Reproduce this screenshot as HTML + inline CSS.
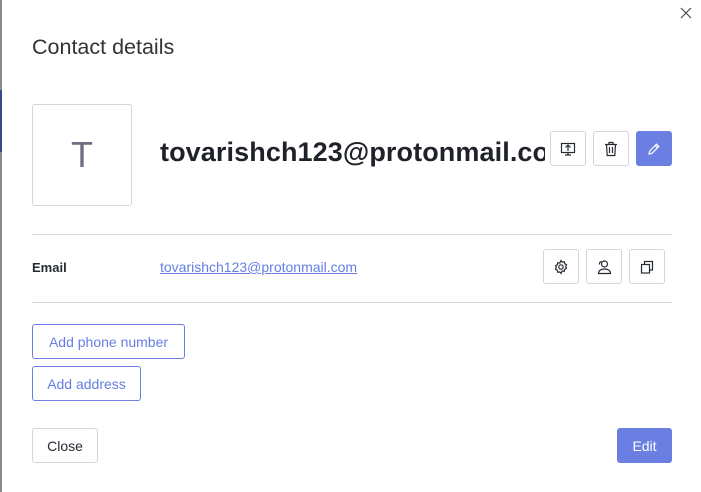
<!DOCTYPE html>
<html><head><meta charset="utf-8"><style>
*{box-sizing:border-box;margin:0;padding:0}
body{width:701px;height:492px;background:#fff;font-family:"Liberation Sans",sans-serif;position:relative;overflow:hidden;color:#262a33}
.abs{position:absolute}
.btn{position:absolute;border:1px solid #d4d4dc;border-radius:3px;background:#fff;display:flex;align-items:center;justify-content:center}
.pb{position:absolute;border:1px solid #6d7fe6;border-radius:3px;color:#657ee4;font-size:14px;display:flex;align-items:center;justify-content:center}
svg{fill:none;stroke:#262a33;stroke-width:1.2}
</style></head><body>
<div class="abs" style="left:0;top:0;width:2px;height:492px;background:#8a8a8a"></div>
<div class="abs" style="left:0;top:90px;width:2px;height:62px;background:#3c4a8a"></div>
<svg class="abs" style="left:680px;top:7px" width="12" height="12" viewBox="0 0 12 12"><path d="M1 1l10 10M11 1L1 11" style="stroke:#444;stroke-width:1.1"/></svg>
<div class="abs" style="left:32px;top:35px;font-size:21.5px;color:#333">Contact details</div>
<div class="abs" style="left:32px;top:104px;width:100px;height:102px;border:1px solid #d4d4dc;border-radius:3px;display:flex;align-items:center;justify-content:center;font-size:36px;color:#6b6f80">T</div>
<div class="abs" style="left:160px;top:137px;width:385px;overflow:hidden;white-space:nowrap;font-size:27px;font-weight:bold;color:#1f222a;letter-spacing:0.1px">tovarishch123@protonmail.com</div>
<div class="btn" style="left:550px;top:131px;width:36px;height:35px"><svg width="16" height="16" viewBox="0 0 16 16"><rect x="1.5" y="2.5" width="13" height="9"/><path d="M8 10V4M5.5 6.5L8 4l2.5 2.5M5 14h6M8 11.5V14"/></svg></div>
<div class="btn" style="left:593px;top:131px;width:36px;height:35px"><svg width="14" height="16" viewBox="0 0 14 16"><path d="M1 3.5h12M5 3.5V1.5h4v2M2.5 3.5l.7 11h7.6l.7-11M5.5 6v6M8.5 6v6"/></svg></div>
<div class="abs" style="left:636px;top:131px;width:36px;height:35px;background:#6b7fe3;border-radius:3px;display:flex;align-items:center;justify-content:center"><svg width="14" height="14" viewBox="0 0 14 14" style="stroke:#fff"><path d="M2 12l.7-3L9.5 2.2l2.3 2.3L5 11.3zM8.3 3.4l2.3 2.3"/></svg></div>
<div class="abs" style="left:32px;top:234px;width:640px;height:1px;background:#d4d4dc"></div>
<div class="abs" style="left:32px;top:260px;font-size:13px;font-weight:bold;color:#262a33">Email</div>
<div class="abs" style="left:160px;top:259px;font-size:14px;color:#657ee4;text-decoration:underline">tovarishch123@protonmail.com</div>
<div class="btn" style="left:543px;top:249px;width:36px;height:35px"><svg width="16" height="16" viewBox="0 0 16 16"><circle cx="8" cy="8" r="2.2"/><path d="M8 1.5l1.2 1.6 2-.4.5 2 1.8 1-.8 1.8.8 1.8-1.8 1-.5 2-2-.4L8 14.5l-1.2-1.6-2 .4-.5-2-1.8-1 .8-1.8-.8-1.8 1.8-1 .5-2 2 .4z"/></svg></div>
<div class="btn" style="left:586px;top:249px;width:36px;height:35px"><svg width="16" height="16" viewBox="0 0 16 16"><circle cx="8.5" cy="5" r="3"/><path d="M2.5 14.5c0-3 2.7-4.5 6-4.5s6 1.5 6 4.5zM3.5 5.5a3 3 0 0 1 2-3.2"/></svg></div>
<div class="btn" style="left:629px;top:249px;width:36px;height:35px"><svg width="14" height="14" viewBox="0 0 14 14"><rect x="1.5" y="4.5" width="8" height="8.5"/><path d="M4.5 4.5V1.5h8v8.5h-3"/></svg></div>
<div class="abs" style="left:32px;top:302px;width:640px;height:1px;background:#d4d4dc"></div>
<div class="pb" style="left:32px;top:324px;width:153px;height:35px">Add phone number</div>
<div class="pb" style="left:32px;top:366px;width:109px;height:35px">Add address</div>
<div class="btn" style="left:32px;top:428px;width:66px;height:35px;font-size:14px;color:#262a33">Close</div>
<div class="abs" style="left:617px;top:428px;width:55px;height:35px;background:#6b7fe3;border-radius:3px;color:#fff;font-size:14px;display:flex;align-items:center;justify-content:center">Edit</div>
</body></html>
